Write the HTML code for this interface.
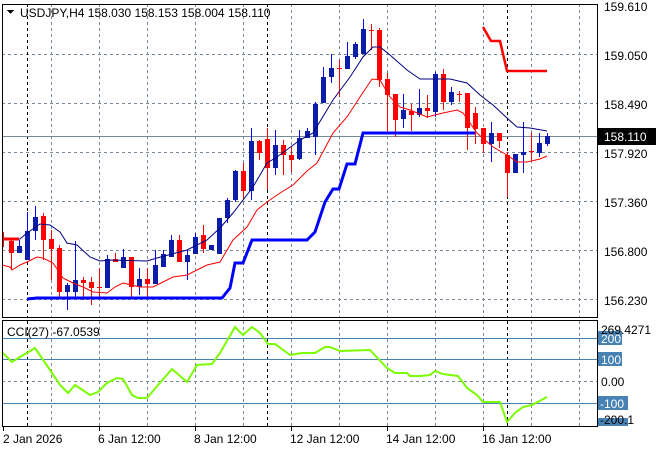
<!DOCTYPE html>
<html><head><meta charset="utf-8"><style>
html,body{margin:0;padding:0;background:#fff;width:660px;height:450px;overflow:hidden}
svg{display:block}
text{font-family:"Liberation Sans",sans-serif;font-size:12px}
</style></head><body>
<svg width="660" height="450" viewBox="0 0 660 450" xmlns="http://www.w3.org/2000/svg" shape-rendering="crispEdges">
<rect width="660" height="450" fill="#fff"/>
<!-- vertical grid main -->
<g stroke="#778899" stroke-dasharray="3,3" stroke-width="1">
<path d="M51.5 4V317M99.5 4V317M147.5 4V317M195.5 4V317M243.5 4V317M291.5 4V317M339.5 4V317M387.5 4V317M435.5 4V317M483.5 4V317M531.5 4V317M579.5 4V317"/>
<path d="M51.5 321V426M99.5 321V426M147.5 321V426M195.5 321V426M243.5 321V426M291.5 321V426M339.5 321V426M387.5 321V426M435.5 321V426M483.5 321V426M531.5 321V426M579.5 321V426"/>
<path d="M2 54.5H597M2 103.5H597M2 152.5H597M2 201.5H597M2 250.5H597M2 299.5H597"/>
<path d="M2 381.5H597"/>
</g>
<g stroke="#000" stroke-dasharray="3,3">
<path d="M27.5 4V317M267.5 4V317M507.5 4V317M27.5 321V426M267.5 321V426M507.5 321V426"/>
</g>
<!-- price line -->
<path d="M2 136.5H597" stroke="#778899"/>
<!-- CCI levels -->
<g stroke="#4682b4"><path d="M2 338.5H597M2 359.5H597M2 403.5H597"/></g>

<!-- candles -->
<g stroke-width="1">
<g stroke="#0000ff">
<path d="M19.5 240V253M27.5 212V260M35.5 206V240M67.5 283V310M75.5 241V297M107.5 255V288M123.5 249V268M139.5 268V295M155.5 250V284M163.5 250V267M171.5 235V257M187.5 250V280M195.5 233V254M211.5 245V250M219.5 218V254M227.5 198V223M235.5 170V202M251.5 128V200M275.5 130V175M299.5 130V160M307.5 128V138M315.5 102V155M323.5 67V103M331.5 54V83M347.5 42V69M355.5 42V59M363.5 19V54M403.5 94V128M419.5 89V117M435.5 72V117M451.5 87V105M491.5 122V162M515.5 154V173M523.5 122V173M539.5 133V157M547.5 133V146"/>
</g>
<g stroke="#ff0000">
<path d="M3.5 232V247M11.5 240V270M43.5 213V260M51.5 230V280M59.5 245V297M83.5 277V300M91.5 277V305M99.5 268V297M115.5 253V262M131.5 257V297M147.5 268V297M179.5 235V262M203.5 225V253M243.5 163V200M259.5 140V160M267.5 128V190M283.5 140V175M291.5 147V172M339.5 60V97M371.5 24V50M379.5 28V87M387.5 73V133M395.5 94V137M411.5 104V131M427.5 95V118M443.5 69V110M459.5 91V102M467.5 93V150M475.5 107V144M483.5 128V153M499.5 133V148M507.5 152V197M531.5 133V160"/>
</g>
<g fill="#0a1eaa" stroke="none">
<rect x="17" y="246" width="5" height="7"/><rect x="25" y="231" width="5" height="29"/><rect x="33" y="217" width="5" height="14"/>
<rect x="65" y="285" width="5" height="7"/><rect x="73" y="280" width="5" height="12"/><rect x="105" y="259" width="5" height="29"/>
<rect x="121" y="257" width="5" height="11"/><rect x="137" y="279" width="5" height="8"/><rect x="153" y="265" width="5" height="19"/>
<rect x="161" y="254" width="5" height="13"/><rect x="169" y="240" width="5" height="17"/><rect x="185" y="255" width="5" height="7"/>
<rect x="193" y="237" width="5" height="17"/><rect x="209" y="245" width="5" height="5"/><rect x="217" y="218" width="5" height="36"/>
<rect x="225" y="200" width="5" height="18"/><rect x="233" y="171" width="5" height="29"/><rect x="249" y="141" width="5" height="50"/>
<rect x="273" y="145" width="5" height="23"/><rect x="297" y="138" width="5" height="21"/><rect x="305" y="131" width="5" height="7"/>
<rect x="313" y="104" width="5" height="33"/><rect x="321" y="77" width="5" height="26"/><rect x="329" y="68" width="5" height="9"/>
<rect x="345" y="56" width="5" height="13"/><rect x="353" y="44" width="5" height="13"/><rect x="361" y="29" width="5" height="25"/>
<rect x="401" y="110" width="5" height="9"/><rect x="417" y="108" width="5" height="7"/><rect x="433" y="74" width="5" height="38"/>
<rect x="449" y="92" width="5" height="10"/><rect x="489" y="133" width="5" height="11"/><rect x="513" y="154" width="5" height="19"/>
<rect x="521" y="152" width="5" height="3"/><rect x="537" y="143" width="5" height="10"/><rect x="545" y="136" width="5" height="8"/>
</g>
<g fill="#ff0000" stroke="none">
<rect x="9" y="241" width="5" height="12"/><rect x="41" y="216" width="5" height="24"/><rect x="49" y="239" width="5" height="10"/>
<rect x="57" y="248" width="5" height="44"/><rect x="81" y="280" width="5" height="3"/><rect x="89" y="282" width="5" height="6"/>
<rect x="97" y="287" width="5" height="1"/><rect x="113" y="259" width="5" height="3"/><rect x="129" y="257" width="5" height="30"/>
<rect x="145" y="279" width="5" height="5"/><rect x="177" y="240" width="5" height="22"/><rect x="201" y="235" width="5" height="14"/>
<rect x="241" y="171" width="5" height="20"/><rect x="257" y="141" width="5" height="12"/><rect x="265" y="139" width="5" height="29"/>
<rect x="281" y="145" width="5" height="10"/><rect x="289" y="155" width="5" height="5"/><rect x="337" y="68" width="5" height="1"/>
<rect x="369" y="30" width="5" height="1"/><rect x="377" y="30" width="5" height="50"/><rect x="385" y="79" width="5" height="16"/>
<rect x="393" y="94" width="5" height="26"/><rect x="409" y="111" width="5" height="4"/><rect x="425" y="108" width="5" height="3"/>
<rect x="441" y="74" width="5" height="28"/><rect x="457" y="94" width="5" height="1"/><rect x="465" y="93" width="5" height="35"/>
<rect x="473" y="113" width="5" height="16"/><rect x="481" y="128" width="5" height="16"/><rect x="497" y="133" width="5" height="8"/>
<rect x="505" y="155" width="5" height="18"/><rect x="529" y="151" width="5" height="1"/>
</g>
</g>
<g fill="none" shape-rendering="auto">
<!-- navy MA -->
<polyline stroke="#000080" stroke-width="1" points="3,240 20,239 27,233 40,224 50,225 60,232 67,243 77,245 90,257 100,261 110,260 147,261 157,258 187,250 207,240 220,228 233,213 253,187 267,163 277,157 300,140 313,133 333,100 350,77 363,57 373,47 380,47 390,55 407,70 420,79 450,79 467,83 480,95 493,105 507,118 517,127 530,128 547,131"/>
<!-- red MA -->
<polyline stroke="#ff0000" stroke-width="1" points="2,265 10,267 12,270 20,265 27,262 37,257 43,258 53,263 63,278 73,283 83,287 93,292 107,293 115,287 123,283 140,287 153,287 173,277 187,275 207,265 220,262 233,240 247,227 257,210 267,202 280,193 293,185 307,171 317,163 333,133 347,117 360,97 372,79 380,80 390,97 400,107 410,110 427,117 443,113 457,110 463,113 477,133 493,147 507,155 517,162 527,162 540,159 547,156"/>
<!-- thick blue step -->
<polyline stroke="#0000ff" stroke-width="3" points="27,299 37,298 222,298 230,288 235,263 243,263 252,240 307,240 315,232 325,202 333,189 339,189 347,164 355,164 363,133 475,133"/>
<!-- thick red step -->
<polyline stroke="#ff0000" stroke-width="3" points="3,239 19,239"/>
<polyline stroke="#ff0000" stroke-width="2.5" points="483,27 491,41 500,41 507,71 547,71"/>
<!-- CCI -->
<polyline stroke="#7cfc00" stroke-width="2" points="2,352 12,362 20,357 35,348 50,370 60,385 68,393 75,385 90,395 98,392 107,383 117,378 123,379 132,395 138,398 147,398 158,385 172,369 187,382 197,365 212,364 220,353 235,327 243,335 252,327 260,333 268,344 275,344 290,355 302,353 315,353 325,347 330,347 340,351 370,350 387,368 395,373 407,373 410,376 420,376 430,375 435,371 443,374 458,376 467,388 477,395 483,402 500,402 507,422 515,413 523,407 532,405 547,397"/>
</g>
<!-- frames -->
<rect x="2.5" y="4.5" width="595" height="313" fill="none" stroke="#000"/>
<rect x="2.5" y="320.5" width="595" height="106" fill="none" stroke="#000"/>
<!-- title -->
<path d="M7 10H14L10.5 14Z" fill="#000"/>
<text x="20" y="17" fill="#000">USDJPY,H4  158.030 158.153 158.004 158.110</text>
<text x="7" y="336" fill="#000">CCI(27) -67.0539</text>
<!-- price axis -->
<g fill="#000">
<text x="604" y="11">159.610</text>
<text x="604" y="60">159.050</text>
<text x="604" y="109">158.490</text>
<text x="604" y="158">157.920</text>
<text x="604" y="207">157.360</text>
<text x="604" y="256">156.800</text>
<text x="604" y="305">156.230</text>
</g>
<rect x="598" y="128" width="58" height="17" fill="#000"/>
<text x="604" y="141" fill="#fff">158.110</text>
<!-- CCI axis -->
<rect x="598" y="331" width="24" height="14" fill="#4682b4"/>
<rect x="598" y="352" width="24" height="14" fill="#4682b4"/>
<rect x="598" y="396" width="30" height="14" fill="#4682b4"/>
<rect x="598" y="418" width="30" height="8" fill="#4682b4"/>
<text x="601" y="343" fill="#fff">200</text>
<text x="601" y="364" fill="#fff">100</text>
<text x="601" y="386" fill="#000">0.00</text>
<text x="600" y="408" fill="#fff">-100</text>
<text x="600" y="424" fill="#000">-200.1</text>
<text x="601" y="334" fill="#000">269.4271</text>
<!-- time axis -->
<g stroke="#000"><path d="M3.5 427V431M99.5 427V431M195.5 427V431M291.5 427V431M387.5 427V431M483.5 427V431"/></g>
<g fill="#000">
<text x="3" y="443">2 Jan 2026</text>
<text x="98" y="443">6 Jan 12:00</text>
<text x="194" y="443">8 Jan 12:00</text>
<text x="290" y="443">12 Jan 12:00</text>
<text x="386" y="443">14 Jan 12:00</text>
<text x="482" y="443">16 Jan 12:00</text>
</g>
</svg>
</body></html>
